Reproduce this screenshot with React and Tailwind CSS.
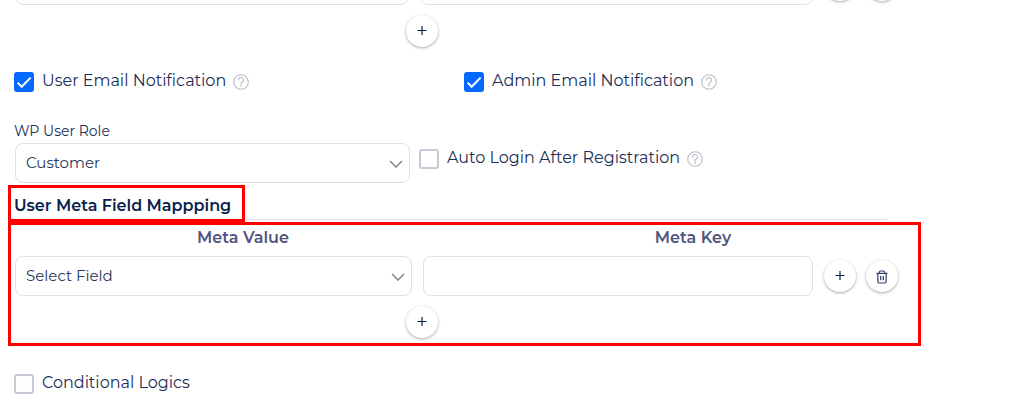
import React from "react";

function HelpIcon() {
  return (
    <button type="button" aria-label="Help" className="shrink-0">
      <svg width="16" height="16" viewBox="0 0 16 16" fill="none" stroke="#b9bcc6" strokeLinecap="round">
        <circle cx="8" cy="8" r="7.3" strokeWidth="1.1" />
        <path d="M5.5 6a2.5 2.5 0 1 1 3.6 2.2C8.3 8.6 8 8.9 8 9.6v2.9" strokeWidth="1.1" />
      </svg>
    </button>
  );
}

function CheckField({ id, label, checked, help }) {
  return (
    <div className="flex items-center">
      <span className="relative mr-2 block size-5 shrink-0">
        <input
          id={id}
          type="checkbox"
          defaultChecked={checked}
          className="peer block size-5 appearance-none rounded-[3px] border-2 border-[#c6cad6] bg-white checked:border-[#0569ff] checked:bg-[#0569ff]"
        />
        <svg
          viewBox="0 0 20 20"
          fill="none"
          stroke="#fff"
          strokeWidth="2"
          className="pointer-events-none absolute inset-0 hidden size-5 peer-checked:block"
        >
          <path d="M3.6 10.6l4.1 4.2L16.6 5.6" />
        </svg>
      </span>
      <label htmlFor={id} className="mr-[7px] pb-[2px] text-base leading-5 font-normal text-[#1b2e59]">
        {label}
      </label>
      {help && <HelpIcon />}
    </div>
  );
}

function SelectBox({ id, label, value }) {
  return (
    <div className="relative min-w-0">
      <select
        id={id}
        aria-label={label}
        className="block h-10 w-full appearance-none rounded-lg border border-[#dfdfe1] bg-white px-[10px] text-[15px] font-normal text-[#2a3759]"
      >
        <option>{value}</option>
      </select>
      <svg
        width="14"
        height="8"
        viewBox="0 0 14 8"
        fill="none"
        stroke="#8b8b8b"
        strokeWidth="1.6"
        className="pointer-events-none absolute top-[17px] right-[7px]"
      >
        <path d="M1 1l6 6 6-6" />
      </svg>
    </div>
  );
}

function RoundButton({ label, children }) {
  return (
    <button
      type="button"
      aria-label={label}
      className="flex size-8 shrink-0 items-center justify-center rounded-full bg-white text-[#0a1f4d] shadow-[0_1px_3px_rgba(0,0,0,0.35)]"
    >
      {children}
    </button>
  );
}

function PlusIcon() {
  return (
    <svg width="10" height="10" viewBox="0 0 10 10" stroke="currentColor" strokeWidth="1.2">
      <path d="M0.5 4.5h9M5 0v9" />
    </svg>
  );
}

function TrashIcon() {
  return (
    <svg width="12" height="14" viewBox="0 0 12 14" fill="none" stroke="#2b3c69" strokeWidth="1.2" className="mt-px">
      <path d="M0.5 3.4h11" />
      <path d="M3.4 3.2V2.2Q3.4 1 4.6 1h2.8Q8.6 1 8.6 2.2v1" />
      <path d="M1.8 3.6v7.9Q1.8 13 3.2 13h5.6q1.4 0 1.4-1.5V3.6" />
      <path d="M4.7 5.9v4.4M7.3 5.9v4.4" />
    </svg>
  );
}

function MappingRow({ name, columns }) {
  return (
    <div className={"grid items-center " + columns}>
      <SelectBox id={name + "-value"} label="Meta Value" value="Select Field" />
      <input
        type="text"
        aria-label="Meta Key"
        className="ml-[11px] h-10 min-w-0 rounded-lg border border-[#dfdfe1] bg-white px-[10px] text-[15px]"
      />
      <div className="ml-[11px]">
        <RoundButton label="Add row"><PlusIcon /></RoundButton>
      </div>
      <div className="ml-[10px]">
        <RoundButton label="Delete row"><TrashIcon /></RoundButton>
      </div>
    </div>
  );
}

export default function App() {
  return (
    <div className="overflow-hidden bg-white font-['Montserrat','Inter',sans-serif]">
      <main className="w-full max-w-[921px] pb-5 pl-2">
        <section className="-mt-[35px] pr-[23px] pl-[7px]">
          <MappingRow name="previous" columns="grid-cols-[394fr_404fr_auto_auto]" />
          <div className="mt-[10px] flex justify-center pr-[70px]">
            <RoundButton label="Add"><PlusIcon /></RoundButton>
          </div>
        </section>

        <section className="mt-6 grid grid-cols-2 pr-[7px] pl-[6px]">
          <CheckField id="user-email" label="User Email Notification" checked help />
          <CheckField id="admin-email" label="Admin Email Notification" checked help />
        </section>

        <section className="mt-[27px] pl-[6px]">
          <label htmlFor="role" className="block h-[23px] text-sm leading-[22px] font-normal text-[#1b2e59]">
            WP User Role
          </label>
          <div className="grid grid-cols-[395fr_511fr] pl-px">
            <SelectBox id="role" label="WP User Role" value="Customer" />
            <div className="pt-[5px] pl-[9px]">
              <CheckField id="auto-login" label="Auto Login After Registration" help />
            </div>
          </div>
        </section>

        <div className="mt-[2px] flex items-end">
          <h2 className="h-[37px] border-3 border-[#ff0000] pr-[11px] pl-[3px] text-base leading-9 font-semibold text-[#0a1f4d]">
            User Meta Field Mappping
          </h2>
          <hr className="mr-[34px] mb-[2px] grow border-[#dfdfe1]" />
        </div>

        <section className="border-3 border-[#ff0000] pb-[5px]">
          <div className="grid h-[31px] grid-cols-2 pl-[7px] text-center text-base leading-[26px] font-semibold text-[#50557d]">
            <span>Meta Value</span>
            <span>Meta Key</span>
          </div>
          <div className="pr-5 pl-1">
            <MappingRow name="meta" columns="grid-cols-[397fr_401fr_auto_auto]" />
            <div className="mt-[10px] flex justify-center pr-[70px]">
              <RoundButton label="Add"><PlusIcon /></RoundButton>
            </div>
          </div>
        </section>

        <section className="mt-[27px] pl-[6px]">
          <CheckField id="conditional" label="Conditional Logics" />
        </section>
      </main>
    </div>
  );
}
